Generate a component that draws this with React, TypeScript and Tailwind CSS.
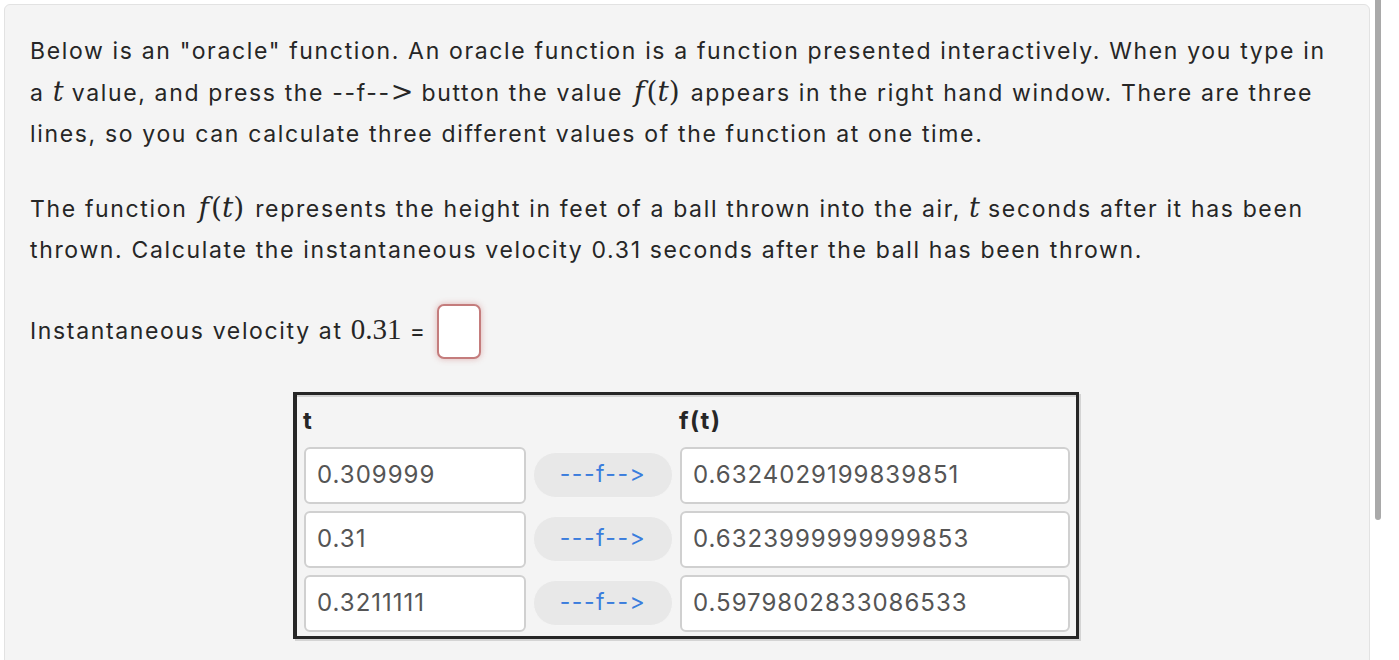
import React from "react";

const ROWS = [
  { t: "0.309999", f: "0.6324029199839851" },
  { t: "0.31", f: "0.6323999999999853" },
  { t: "0.3211111", f: "0.5979802833086533" },
];

const SERIF = { fontFamily: '"DejaVu Serif", "Liberation Serif", serif', letterSpacing: 0 };

function T() {
  return (
    <span className="italic text-[27px] leading-[0]" style={SERIF}>
      t
    </span>
  );
}

function FT() {
  return (
    <span className="text-[28px] leading-[0] mx-[3px]" style={SERIF}>
      <span className="italic">f</span>
      <span className="ml-[2px]">(</span>
      <span className="italic">t</span>)
    </span>
  );
}

export default function App() {
  return (
    <div
      className="relative min-h-screen bg-white overflow-hidden"
      style={{ fontFamily: 'Inter, "Noto Sans", sans-serif' }}
    >
      <div className="ml-[4px] mt-[4px] w-[1366px] h-[700px] bg-[#f4f4f4] border border-[#e2e2e2] rounded-md pl-[25px] pr-[20px] pt-[26px] text-[#262626] text-[23px] tracking-[1.65px] leading-[41.5px]">
        <p>
          Below is an "oracle" function. An oracle function is a function presented interactively. When you type in
          <br />a <T /> value, and press the --f--
          <span className="text-[27px] leading-[0]" style={SERIF}>&gt;</span> button the value <FT /> appears in the right
          hand window. There are three
          <br />
          lines, so you can calculate three different values of the function at one time.
        </p>

        <p className="mt-[33px]">
          The function <FT /> represents the height in feet of a ball thrown into the air, <T /> seconds after it has
          been
          <br />
          thrown. Calculate the instantaneous velocity 0.31 seconds after the ball has been thrown.
        </p>

        <div className="mt-[32px] flex items-center gap-[10px]">
          <span>
            Instantaneous velocity at{" "}
            <span className="text-[29px]" style={{ fontFamily: '"Liberation Serif", serif', letterSpacing: 0 }}>
              0.31
            </span>{" "}
            =
          </span>
          <div className="w-[44px] h-[55px] bg-white border-2 border-[#c47c7c] rounded-[7px] shadow-[0_0_6px_rgba(200,100,100,0.45)]" />
        </div>

        <div className="mt-[33px] ml-[263px] w-[786px] border-t-[3px] border-l-[4px] border-r-[3px] border-b-[3px] border-[#262626] shadow-[2px_2px_0_#d4d4d4,inset_0_2px_0_#d4d4d4] pt-[1px] pl-[7px] pr-[4px] pb-[4px]">
          <div className="flex h-[51px] items-center text-[24px] font-bold tracking-[1.5px]">
            <span className="w-[376px] -ml-[1px]">t</span>
            <span>f(t)</span>
          </div>
          <div className="flex flex-col gap-[7px] tracking-[1px]">
            {ROWS.map((r) => (
              <div key={r.t} className="flex items-center gap-[7px]">
                <div className="w-[222px] h-[57px] bg-white border-2 border-[#d0d0d0] rounded-[6px] flex items-center pl-[11px] text-[24px] text-[#555]">
                  {r.t}
                </div>
                <div className="w-[140px] h-[46px] bg-[#e8e8e8] border border-[#f5f5f5] rounded-full flex items-center justify-center text-[23px] tracking-[1.5px] text-[#3b7ddd]">
                  ---f--&gt;
                </div>
                <div className="w-[390px] h-[57px] bg-white border-2 border-[#d0d0d0] rounded-[6px] flex items-center pl-[11px] text-[24px] text-[#555]">
                  {r.f}
                </div>
              </div>
            ))}
          </div>
        </div>
      </div>
      <div className="absolute left-[1375px] top-0 w-[6px] h-[520px] bg-[#a9a9a9] rounded-b-full" />
    </div>
  );
}
